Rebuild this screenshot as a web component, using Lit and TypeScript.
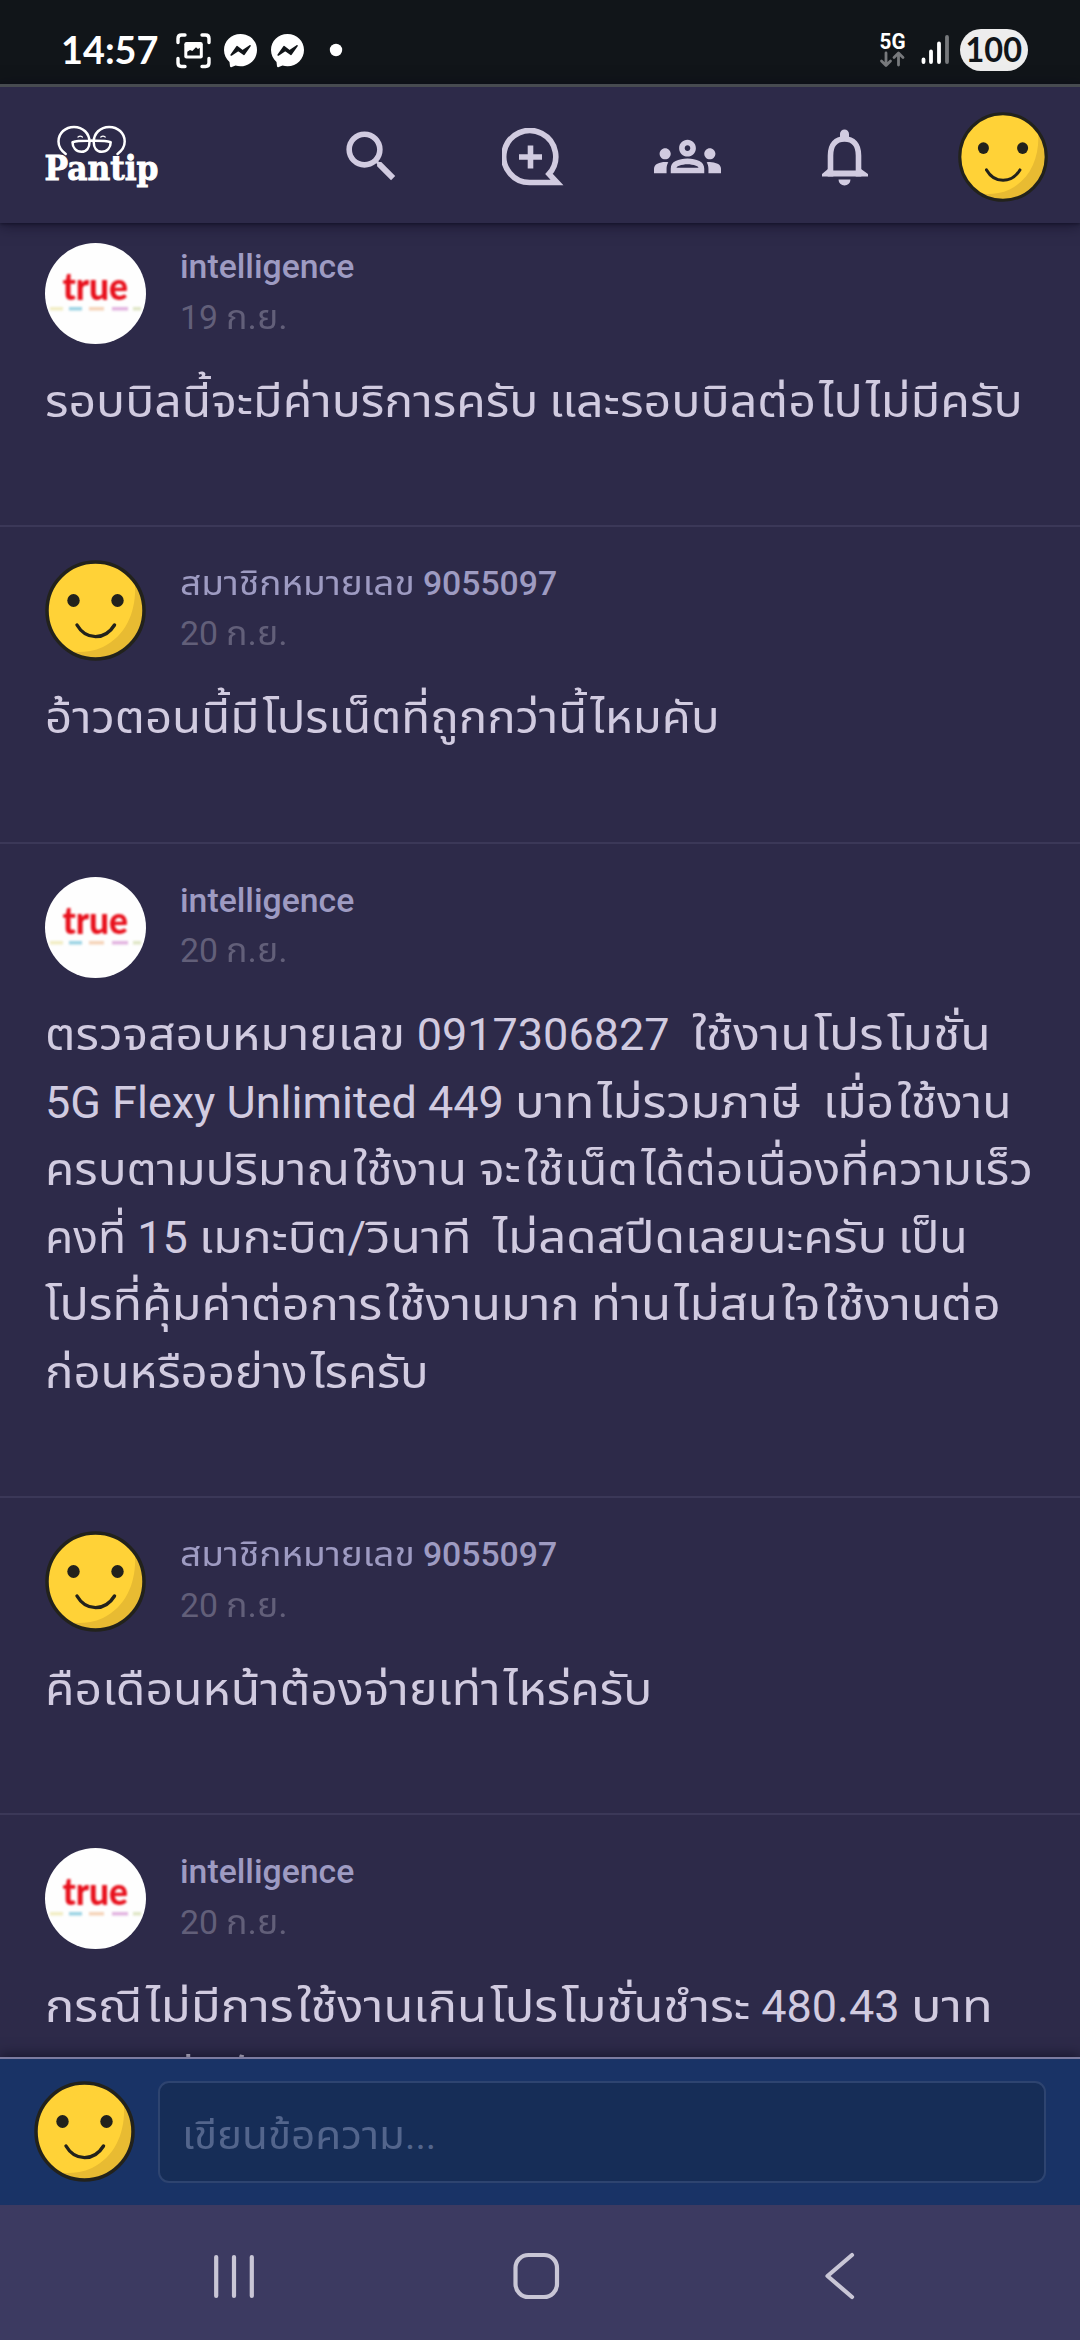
import { LitElement, html, css, svg } from "lit";
import { customElement, property, state } from "lit/decorators.js";

/** A run of text; with `w`, the run is stretched horizontally to that width in px. */
interface Run {
  t: string;
  w?: number;
}
type Line = Run[];

interface Comment {
  name: Line;
  kind: "true" | "smile";
  day: string;
  lines: Line[];
}

const PROVIDER: Line = [{ t: "intelligence" }];
const MEMBER: Line = [{ t: "สมาชิกหมายเลข", w: 234.5 }, { t: " 9055097" }];

const COMMENTS: Comment[] = [
  {
    name: PROVIDER, kind: "true", day: "19",
    lines: [[{ t: "รอบบิลนี้จะมีค่าบริการครับ", w: 493 }, { t: " " }, { t: "และรอบบิลต่อไปไม่มีครับ", w: 474 }]],
  },
  { name: MEMBER, kind: "smile", day: "20", lines: [[{ t: "อ้าวตอนนี้มีโปรเน็ตที่ถูกกว่านี้ไหมคับ", w: 675 }]] },
  {
    name: PROVIDER, kind: "true", day: "20",
    lines: [
      [{ t: "ตรวจสอบหมายเลข", w: 360.5 }, { t: " 0917306827  " }, { t: "ใช้งานโปรโมชั่น", w: 299 }],
      [{ t: "5G Flexy Unlimited 449 " }, { t: "บาทไม่รวมภาษี", w: 286 }, { t: "  " }, { t: "เมื่อใช้งาน", w: 188.5 }],
      [{ t: "ครบตามปริมาณใช้งาน", w: 422.4 }, { t: " " }, { t: "จะใช้เน็ตได้ต่อเนื่องที่ความเร็ว", w: 554 }],
      [{ t: "คงที่", w: 81 }, { t: " 15 " }, { t: "เมกะบิต", w: 148.5 }, { t: "/" }, { t: "วินาที", w: 105 }, { t: "  " }, { t: "ไม่ลดสปีดเลยนะครับ", w: 394 }, { t: " " }, { t: "เป็น", w: 70 }],
      [{ t: "โปรที่คุ้มค่าต่อการใช้งานมาก", w: 534.5 }, { t: " " }, { t: "ท่านไม่สนใจใช้งานต่อ", w: 410 }],
      [{ t: "ก่อนหรืออย่างไรครับ", w: 384 }],
    ],
  },
  { name: MEMBER, kind: "smile", day: "20", lines: [[{ t: "คือเดือนหน้าต้องจ่ายเท่าไหร่ครับ", w: 607 }]] },
  {
    name: PROVIDER, kind: "true", day: "20",
    lines: [
      [{ t: "กรณีไม่มีการใช้งานเกินโปรโมชั่นชำระ", w: 705 }, { t: " 480.43 " }, { t: "บาท", w: 82 }],
      [{ t: "รวมภาษี", w: 150 }, { t: "ครับ", w: 92 }],
    ],
  },
];

/** Stretches its text horizontally so that it fills `width`. */
@customElement("fit-run")
export class FitRun extends LitElement {
  @property() text = "";
  @property({ type: Number }) width = 0;
  @state() private ratio = 1;
  static styles = css`
    :host { display: inline-block; white-space: pre; }
    .box { display: inline-block; }
    .ink { display: inline-block; transform-origin: 0 50%; }
    .lead { padding-left: 0.07em; }
  `;
  firstUpdated() {
    this.measure();
    document.fonts.ready.then(() => this.measure());
  }
  private measure() {
    const ink = this.renderRoot.querySelector<HTMLElement>(".ink");
    if (!ink) return;
    const natural = ink.offsetWidth;
    if (natural > 0) this.ratio = this.width / natural;
  }
  render() {
    const parts = this.text.split(/(?=[ไใโ])/);
    return html`<span class="box" style="width:${this.width}px"><span class="ink" style="transform:scaleX(${this.ratio})">${parts.map((p, i) => (i ? html`<span class="lead">${p}</span>` : p))}</span></span>`;
  }
}

const line = (runs: Line) =>
  runs.map((r) => (r.w ? html`<fit-run .text=${r.t} .width=${r.w}></fit-run>` : html`<span>${r.t}</span>`));

@customElement("user-avatar")
export class UserAvatar extends LitElement {
  @property() kind = "smile";
  static styles = css`
    :host { display: block; width: 101px; height: 101px; flex: none; }
    svg { display: block; width: 100%; height: 100%; }
    .word { font: 900 37px Lato, "Open Sans", sans-serif; fill: #e8101c; filter: blur(0.8px); }
    .dots { filter: blur(0.9px); }
  `;
  render() {
    if (this.kind === "true") {
      return html`<svg viewBox="0 0 101 101">
        <circle cx="50.5" cy="50.5" r="50.5" fill="#fefefe" />
        <text class="word" x="17.500" y="57" textLength="65.500" lengthAdjust="spacingAndGlyphs">true</text>
        <g class="dots">
          <rect x="5" y="64" width="13" height="3.500" fill="#f1edc4" />
          <rect x="24" y="64" width="13" height="3.500" fill="#9bd3e4" />
          <rect x="44" y="64" width="15" height="3.500" fill="#f5d3b8" />
          <rect x="67" y="64" width="16" height="3.500" fill="#e2b4e0" />
          <rect x="88" y="64" width="8" height="3.500" fill="#dfe6c6" />
        </g>
      </svg>`;
    }
    return html`<svg viewBox="0 0 101 101">
      <circle cx="50.5" cy="50.5" r="48.5" fill="#e8bb32" />
      <path d="M90 24C91.500 50 82 75 58 87C46 92.500 34 92.500 23 91.500A48.500 48.500 0 1 1 90 24Z" fill="#ffd237" />
      <circle cx="50.500" cy="50.500" r="48.500" fill="none" stroke="#22221c" stroke-width="3.500" />
      <ellipse cx="28.500" cy="40.500" rx="6.200" ry="6.500" fill="#22221c" />
      <ellipse cx="72.500" cy="40.500" rx="6.200" ry="6.500" fill="#22221c" />
      <path d="M32 65C41 80.500 60 80.500 69.500 65" fill="none" stroke="#22221c" stroke-width="3.400" stroke-linecap="round" />
    </svg>`;
  }
}

@customElement("status-bar")
export class StatusBar extends LitElement {
  static styles = css`
    :host { display: block; height: 84px; background: #111519; }
    svg { display: block; }
    .clock { font: 700 38px Lato, sans-serif; }
    .net { font: 700 21.5px Roboto, sans-serif; }
    .bat { font: 700 33.5px Lato, sans-serif; }
  `;
  render() {
    const messenger = (x: number) => svg`<g transform="translate(${x} 34)">
      <path d="M16.500 0C7 0 0 7 0 16C0 21 2.200 25 5.500 28L6 32.200C6.200 33.200 7 33.500 7.800 33L11.500 31.600C13 32 14.800 32.300 16.500 32.300C26 32.300 33 25 33 16C33 7 26 0 16.500 0Z" fill="#fff"/>
      <path d="M7.200 21L13 12.700L18.500 16.800L26 11.800L20 20.300L14.300 16.300Z" fill="#111519" stroke="#111519" stroke-width="1.600" stroke-linejoin="round"/>
    </g>`;
    return html`<svg width="1080" height="84" viewBox="0 0 1080 84">
      <text class="clock" x="61" y="64" fill="#fff" textLength="97.500" lengthAdjust="spacingAndGlyphs">14:57</text>
      <path d="M178 42.500V38.500Q178 35 181.500 35H185M202 35H205.500Q209 35 209 38.500V42.500M209 58.500V63Q209 66.500 205.500 66.500H202M185 66.500H181.500Q178 66.500 178 63V58.500" fill="none" stroke="#fff" stroke-width="3.400" stroke-linecap="round" />
      <rect x="184.300" y="42" width="18.500" height="16.500" rx="2.200" fill="#fff" />
      <path d="M187.300 55.500V51.800L190 50L192.300 51L196 47.300L198 49L199.800 47.800V55.500Z" fill="#111519" />
      ${messenger(224)} ${messenger(271)}
      <circle cx="336" cy="50" r="6.200" fill="#fff" />
      <text class="net" x="879.500" y="48.500" fill="#fff" textLength="26" lengthAdjust="spacingAndGlyphs">5G</text>
      <path d="M886 53V65M881.500 61L886 65.500L890.500 61M898.500 65V53.500M894 57.500L898.500 53L903 57.500" fill="none" stroke="#77797c" stroke-width="2.800" stroke-linecap="round" stroke-linejoin="round" />
      <g stroke-width="3.800" stroke-linecap="round" stroke="#fff">
        <path d="M923.500 59.500V62M931 51.500V62M939 43.500V62" />
        <path d="M947 37V62" stroke="#77797c" />
      </g>
      <rect x="960" y="29" width="68" height="42" rx="21" fill="#ededed" />
      <text class="bat" x="965.500" y="62" fill="#111519" textLength="56.500" lengthAdjust="spacingAndGlyphs">100</text>
    </svg>`;
  }
}

@customElement("site-header")
export class SiteHeader extends LitElement {
  static styles = css`
    :host { display: flex; align-items: center; height: 139px; padding-top: 3px; box-sizing: border-box; border-top: 3px solid #474b50; background: #2d2a49; box-shadow: 0 2px 14px rgba(10, 8, 26, .55), 0 1px 3px rgba(10, 8, 26, .5); position: relative; z-index: 2; }
    svg { display: block; flex: none; }
    .logo { margin-left: 40px; }
    .mark { font: 700 33px "DejaVu Serif", "Liberation Serif", serif; stroke: #fff; stroke-width: 0.9px; }
    .search { margin-left: 172.5px; }
    .post { margin-left: 97px; }
    .groups { margin-left: 90px; }
    .bell { margin-left: 100.5px; }
    user-avatar { width: 90px; height: 90px; margin-left: 88.5px; }
  `;
  render() {
    const face = svg`<path d="M65.700 153C61 149.500 58.500 145 58.500 140.500C58.500 132 65.500 125.900 74 125.900C83 125.900 89.500 132.500 89.500 141C89.500 147 86.500 150.800 81.500 150.800C76 150.800 72.500 146.500 72.500 141.200C78 139.500 85 139.800 91.600 139.800" /><path d="M78 136Q80.200 134.200 82.400 136" stroke-width="1.200" />`;
    return html`
      <svg class="logo" width="125" height="80" viewBox="40 116 125 80">
        <g fill="none" stroke="#fff" stroke-width="2.500" stroke-linecap="round" stroke-linejoin="round">
          <g>${face}</g>
          <g transform="translate(183.200 0) scale(-1 1)">${face}</g>
        </g>
        <text class="mark" x="44.500" y="178.500" fill="#fff" textLength="114" lengthAdjust="spacingAndGlyphs">Pantip</text>
      </svg>
      <svg class="search" width="67" height="67" viewBox="0 0 24 24" fill="#d1cbe0"><path d="M15.500 14h-.79l-.28-.27A6.471 6.471 0 0 0 16 9.500 6.500 6.500 0 1 0 9.500 16c1.610 0 3.090-.59 4.230-1.570l.27.28v.79l5 4.990L20.490 19l-4.990-5zm-6 0C7.010 14 5 11.990 5 9.500S7.010 5 9.500 5 14 7.010 14 9.500 11.990 14 9.500 14z"/></svg>
      <svg class="post" width="62" height="58" viewBox="501 127.500 62 58" fill="none" stroke="#d1cbe0" stroke-width="5.600">
        <path d="M529.500 182A26 26 0 1 1 548 173.500L556 182Z" /><path d="M529.500 145V168M518 156.500H541" />
      </svg>
      <svg class="groups" width="67" height="67" viewBox="0 0 24 24" fill="#d1cbe0"><path d="M4 13c1.100 0 2-.9 2-2s-.9-2-2-2-2 .9-2 2 .9 2 2 2zm1.130 1.100C4.760 14.040 4.390 14 4 14c-.99 0-1.930.21-2.780.58C.48 14.900 0 15.620 0 16.430V18h4.500v-1.610c0-.83.23-1.610.63-2.290zM20 13c1.100 0 2-.9 2-2s-.9-2-2-2-2 .9-2 2 .9 2 2 2zm4 3.430c0-.81-.48-1.530-1.220-1.850A6.950 6.950 0 0 0 20 14c-.39 0-.76.04-1.130.1.400.68.63 1.460.63 2.290V18H24v-1.570zM16.240 13.650C15.070 13.130 13.630 12.750 12 12.750s-3.070.39-4.240.9A2.988 2.988 0 0 0 6 16.390V18h12v-1.610c0-1.180-.68-2.260-1.760-2.740zM8.070 16c.09-.23.13-.39.91-.69.97-.38 1.990-.56 3.020-.56s2.050.18 3.020.56c.77.3.81.46.91.69H8.070zM12 8c.55 0 1 .45 1 1s-.45 1-1 1-1-.45-1-1 .45-1 1-1m0-2c-1.660 0-3 1.340-3 3s1.340 3 3 3 3-1.340 3-3-1.340-3-3-3z"/></svg>
      <svg class="bell" width="48" height="58" viewBox="820 127.500 48 58">
        <path d="M829.500 176V155C829.500 144 835 138.500 843.500 138.500C852 138.500 857.500 144 857.500 155V176" fill="none" stroke="#d1cbe0" stroke-width="5.600"/>
        <path d="M839 138V133.500A4.500 4.500 0 0 1 848 133.500V138ZM821 173.500L827 168.500V170H860V168.500L867 173.500V176H821ZM837.500 179H849.500A6 6 0 0 1 837.500 179Z" fill="#d1cbe0"/>
      </svg>
      <user-avatar></user-avatar>`;
  }
}

@customElement("comment-item")
export class CommentItem extends LitElement {
  @property({ attribute: false }) comment!: Comment;
  static styles = css`
    :host { display: block; padding: 33px 0 89.875px 45px; border-bottom: 2px solid #3b3858; font-family: Roboto, "Noto Sans Thai", "Noto Sans", sans-serif; }
    .head { display: flex; gap: 34px; height: 101px; }
    .name { font-size: 33.75px; font-weight: 500; line-height: 50.5px; height: 50.5px; color: #9e9bc2; white-space: pre; margin-top: -1px; }
    .name fit-run { font-weight: 400; }
    .date { font-size: 33.75px; line-height: 50.5px; height: 50.5px; color: #625f79; white-space: pre; }
    .body { margin-top: 23.5px; font-size: 45px; line-height: 67.5px; color: #d1cbe0; }
    .line { height: 67.5px; white-space: pre; }
  `;
  render() {
    const c = this.comment;
    return html`<div class="head">
        <user-avatar kind=${c.kind}></user-avatar>
        <div><div class="name">${line(c.name)}</div><div class="date">${line([{ t: c.day + " " }, { t: "ก.ย.", w: 61.5 }])}</div></div>
      </div>
      <div class="body">${c.lines.map((l) => html`<div class="line">${line(l)}</div>`)}</div>`;
  }
}

@customElement("app-root")
export class AppRoot extends LitElement {
  static styles = css`
    :host { display: flex; flex-direction: column; width: 1080px; height: 2340px; overflow: hidden; background: #2d2a49; }
    status-bar, site-header { flex: none; }
    main { flex: 1; min-height: 0; overflow: hidden; }
    .list { margin-top: -13px; }
    .reply { flex: none; display: flex; gap: 23px; box-sizing: border-box; height: 148px; padding: 22px 34px; border-top: 2px solid #7c7ba0; background: #193366; box-shadow: 0 -2px 12px rgba(10, 8, 26, .6); position: relative; z-index: 1; }
    .field { flex: 1; box-sizing: border-box; height: 102px; border: 2px solid #2e4470; border-radius: 11px; background: #162d57; padding: 3px 0 0 22px; font: 39.375px/100px Roboto, "Noto Sans Thai", "Noto Sans", sans-serif; color: #53658c; white-space: pre; }
    nav { flex: none; height: 135px; background: #3c3a61; position: relative; z-index: 2; }
    nav svg { display: block; }
  `;
  render() {
    return html`
      <status-bar></status-bar>
      <site-header></site-header>
      <main><div class="list">${COMMENTS.map((c) => html`<comment-item .comment=${c}></comment-item>`)}</div></main>
      <div class="reply"><user-avatar></user-avatar><div class="field">${line([{ t: "เขียนข้อความ", w: 223 }, { t: "..." }])}</div></div>
      <nav><svg width="1080" height="135" viewBox="0 2205 1080 135" fill="none" stroke="#c9c6d6" stroke-width="4.200" stroke-linecap="round" stroke-linejoin="round">
        <path d="M216.200 2257V2296M234 2257V2296M251.800 2257V2296M852 2255L827.500 2276L852 2297" />
        <rect x="515.500" y="2255" width="41.500" height="42" rx="13" />
      </svg></nav>`;
  }
}
